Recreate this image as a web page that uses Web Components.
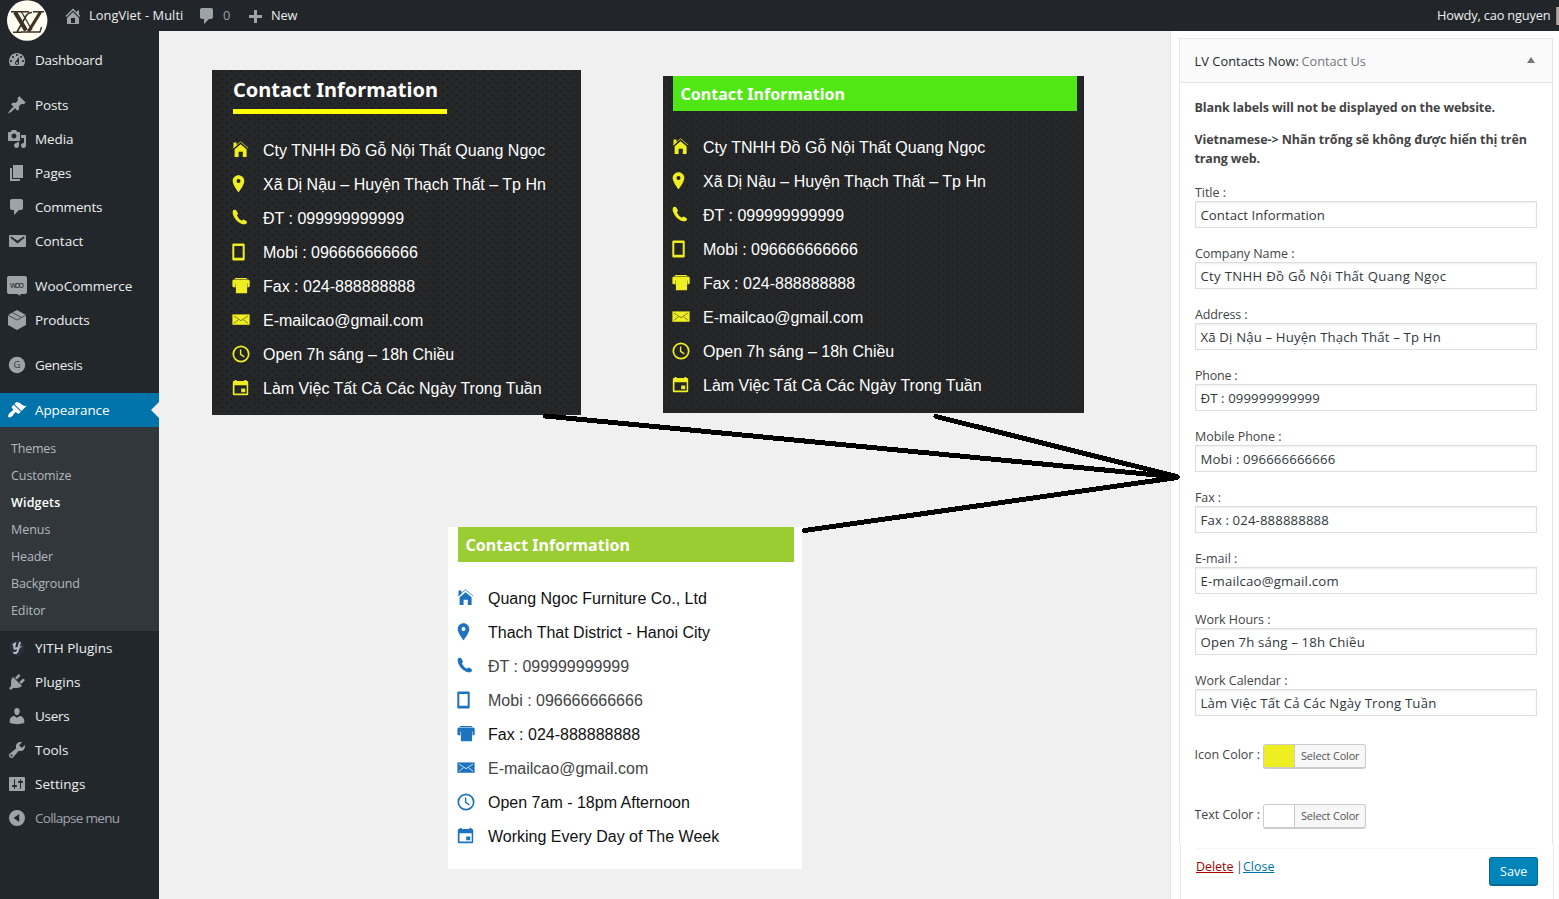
<!DOCTYPE html>
<html lang="vi">
<head>
<meta charset="utf-8">
<title>Widgets - LongViet</title>
<style>
html,body{margin:0;height:100%;overflow:hidden}
body{background:#f0f0f0;font-family:"Open Sans","Noto Sans",sans-serif;font-size:13px;color:#444}
</style>
</head>
<body>
<wp-screen></wp-screen>
<script>
const define=(name,html,setup)=>customElements.define(name,class extends HTMLElement{
  connectedCallback(){
    if(this.shadowRoot)return;
    const t=document.createElement('template');
    t.innerHTML=typeof html==='function'?html(this):html;
    this.attachShadow({mode:'open'}).append(t.content.cloneNode(true));
    if(setup)setup(this);
  }
});

/* Text run set to an exact width through letter-spacing */
define('fit-text','<style>:host{display:inline-block;white-space:nowrap}span{display:inline-block;white-space:pre;text-decoration:var(--line,none)}</style><span><slot></slot></span>',el=>{
  const s=el.shadowRoot.querySelector('span'),w=parseFloat(el.getAttribute('w')),n=el.textContent.length;
  if(w){s.style.letterSpacing=((w+.4-s.getBoundingClientRect().width)/n).toFixed(4)+'px';el.style.width=w+'px'}
});

const DASH={
home:'<path fill-rule="evenodd" d="M16 8.5l1.53 1.53-1.06 1.06L10 4.6l-6.47 6.49-1.06-1.06L10 2.5l4 4v-2h2v4zm-6-2.46l6 5.99V18H4v-5.97zM12 17v-5H8v5h4z"/>',
plus:'<path d="M17 9v3h-5v5H9v-5H4V9h5V4h3v5h5z"/>',
dashboard:'<path fill-rule="evenodd" d="M3.76 16h12.48c1.1-1.37 1.76-3.11 1.76-5 0-4.42-3.58-8-8-8s-8 3.58-8 8c0 1.89.66 3.63 1.76 5zM10 4c.55 0 1 .45 1 1s-.45 1-1 1-1-.45-1-1 .45-1 1-1zM6 6c.55 0 1 .45 1 1s-.45 1-1 1-1-.45-1-1 .45-1 1-1zm8 0c.55 0 1 .45 1 1s-.45 1-1 1-1-.45-1-1 .45-1 1-1zm-5.37 5.55L12 7v6c0 1.1-.9 2-2 2s-2-.9-2-2c0-.57.24-1.08.63-1.45zM4 10c.55 0 1 .45 1 1s-.45 1-1 1-1-.45-1-1 .45-1 1-1zm12 0c.55 0 1 .45 1 1s-.45 1-1 1-1-.45-1-1 .45-1 1-1zm-5 3c0-.55-.45-1-1-1s-1 .45-1 1 .45 1 1 1 1-.45 1-1z"/>',
post:'<path d="M10.44 3.02l1.82-1.82 6.36 6.35-1.83 1.82c-1.05-.68-2.48-.57-3.41.36l-.75.75c-.92.93-1.04 2.35-.35 3.41l-1.83 1.82-2.41-2.41-2.8 2.79c-.42.42-3.38 2.71-3.8 2.29s1.86-3.39 2.28-3.81l2.79-2.79L4.1 9.36l1.83-1.82c1.05.69 2.48.57 3.4-.36l.75-.75c.93-.92 1.05-2.35.36-3.41z"/>',
media:'<path fill-rule="evenodd" d="M13 11V4c0-.55-.45-1-1-1h-1.67L9 1H5L3.67 3H2c-.55 0-1 .45-1 1v7c0 .55.45 1 1 1h10c.55 0 1-.45 1-1zM7 4.5c1.38 0 2.5 1.12 2.5 2.5S8.38 9.5 7 9.5 4.5 8.38 4.5 7 5.62 4.5 7 4.5zM14 6h5v10.5c0 1.38-1.12 2.5-2.5 2.5S14 17.88 14 16.5s1.12-2.5 2.5-2.5c.17 0 .34.02.5.05V9h-3V6zm-4 8.05V13h2v3.5c0 1.38-1.12 2.5-2.5 2.5S7 17.88 7 16.5 8.12 14 9.5 14c.17 0 .34.02.5.05z"/>',
page:'<path d="M6 15V2h10v13H6zm-1 1h8v2H3V5h2v11z"/>',
comment:'<path d="M5 2h9c1.1 0 2 .9 2 2v7c0 1.1-.9 2-2 2h-2l-5 5v-5H5c-1.1 0-2-.9-2-2V4c0-1.1.9-2 2-2z"/>',
mail:'<path fill-rule="evenodd" d="M3 4h15q1 0 1 1v10q0 1-1 1H3q-1 0-1-1V5q0-1 1-1zm7.49 8.6l6.74-5.53c.24-.2.43-.66.13-1.07-.29-.41-.82-.42-1.17-.17l-5.7 3.86L4.8 5.83c-.35-.25-.88-.24-1.17.17-.3.41-.11.87.13 1.07z"/>',
woo:'<path d="M2 0h16q2 0 2 2v14q0 2-2 2h-5l1 2-4-2H2q-2 0-2-2V2Q0 0 2 0z"/><text x="10" y="11.600" text-anchor="middle" textLength="14" font-family="Open Sans" font-weight="600" font-size="7" fill="#33383d">WOO</text>',
box:'<path d="M10 0l9 5v10l-9 5-9-5V5z"/><path d="M1 5.2l9 4.800 9-4.800M5.500 2.700l9 4.800" fill="none" stroke="#3b4046" stroke-width=".9"/>',
genesis:'<circle cx="10" cy="10" r="8.2"/><text x="10" y="13.400" text-anchor="middle" font-family="Open Sans" font-size="9.500" fill="#33383d">G</text>',
brush:'<path d="M14.48 11.06L7.41 3.99l1.5-1.5c.5-.56 2.3-.47 3.51.32 1.21.8 1.43 1.28 2.91 2.1 1.18.64 2.45 1.26 4.45.85zm-.71.71L6.7 4.7 4.93 6.47c-.39.39-.39 1.02 0 1.41l1.06 1.06c.39.39.39 1.03 0 1.42-.6.6-1.43 1.11-2.21 1.69-.35.26-.7.53-1.01.84C1.43 14.23.4 16.08 1.4 17.07c.99 1 2.84-.03 4.18-1.36.31-.31.58-.66.85-1.02.57-.78 1.08-1.61 1.69-2.21.39-.39 1.02-.39 1.41 0l1.06 1.06c.39.39 1.02.39 1.41 0z"/>',
yith:'<circle cx="10" cy="10" r="8" fill="#262f40"/><g fill="none" stroke="#b6babd" stroke-width="2" stroke-linecap="round"><path d="M6.400 6.600l1.500-.8-.7 4q.3 1.800 2.600.4M12.800 4.800l-2.200 8.400Q9.400 16 7 14.700"/><path d="M11 11l3.600-2.600" stroke-width="1"/></g>',
plug:'<path d="M13.11 4.36L9.87 7.6 8 5.73l3.24-3.24c.35-.34 1.05-.2 1.56.32.52.51.66 1.21.31 1.55zm-8 1.77l.91-1.12 9.01 9.01-1.19.84c-.71.71-2.63 1.16-3.82 1.16H6.14L4.9 17.26c-.59.59-1.54.59-2.12 0-.59-.58-.59-1.53 0-2.12l1.24-1.24v-3.88c0-1.13.4-3.19 1.09-3.89zm7.26 3.97l3.24-3.24c.34-.35 1.04-.21 1.55.31.52.51.66 1.21.31 1.55l-3.24 3.25z"/>',
user:'<path d="M10 9.25c-2.27 0-2.73-3.44-2.73-3.44C7 4.02 7.82 2 9.97 2c2.16 0 2.98 2.02 2.71 3.81 0 0-.41 3.44-2.68 3.44zm0 2.57L12.72 10c2.39 0 4.52 2.33 4.52 4.53v2.49s-3.65 1.13-7.24 1.13c-3.65 0-7.24-1.13-7.24-1.13v-2.49c0-2.25 1.94-4.48 4.47-4.48z"/>',
tool:'<path fill-rule="evenodd" d="M16.68 9.77c-1.34 1.34-3.3 1.67-4.95.99l-5.41 6.52c-.99.99-2.59.99-3.58 0s-.99-2.59 0-3.57l6.52-5.42c-.68-1.65-.35-3.61.99-4.95 1.28-1.28 3.12-1.62 4.72-1.06l-2.89 2.89 2.82 2.82 2.86-2.87c.53 1.58.18 3.39-1.08 4.65zM3.81 16.21c.4.39 1.04.39 1.43 0 .4-.4.4-1.04 0-1.43-.39-.4-1.03-.4-1.43 0-.39.39-.39 1.03 0 1.43z"/>',
settings:'<path fill-rule="evenodd" d="M18 16V4c0-.55-.45-1-1-1H3c-.55 0-1 .45-1 1v12c0 .55.45 1 1 1h14c.55 0 1-.45 1-1zM8 11h1c.55 0 1 .45 1 1s-.45 1-1 1H8v1.5c0 .28-.22.5-.5.5s-.5-.22-.5-.5V13H6c-.55 0-1-.45-1-1s.45-1 1-1h1V5.5c0-.28.22-.5.5-.5s.5.22.5.5V11zm5-2h-1c-.55 0-1-.45-1-1s.45-1 1-1h1V5.5c0-.28.22-.5.5-.5s.5.22.5.5V7h1c.55 0 1 .45 1 1s-.45 1-1 1h-1v5.5c0 .28-.22.5-.5.5s-.5-.22-.5-.5V9z"/>',
collapse:'<path fill-rule="evenodd" d="M10 2a8 8 0 1 1 0 16 8 8 0 0 1 0-16zM12.200 6L6.600 10l5.600 4z"/>'
};
define('dash-icon',el=>`<style>:host{display:block;width:20px;height:20px;color:#9ea3a8;flex:none}svg{display:block;overflow:visible}</style><svg width="20" height="20" viewBox="0 0 20 20" fill="currentColor">${DASH[el.getAttribute('name')]}</svg>`);

/* 18px glyphs of the contact list */
const CI={
house:'<g transform="translate(0 -.6)"><path d="M2.600 8.800L8.600 3.900l6 4.900v7.800h-3.800v-5.200H6.600v5.200H2.600zM1.500 2h3v3.400L1.500 7.800z"/><path d="M.8 7.700L8.600 1.400l7.600 6.300" fill="none" stroke="currentColor" stroke-width="1" opacity=".75"/></g>',
pin:'<path fill-rule="evenodd" d="M6.500.2C3.200.2.700 2.700.700 5.900c0 4.300 5.800 11.300 5.800 11.300s5.800-7 5.800-11.300C12.300 2.700 9.800.2 6.500.2zm0 3.800a2 2 0 1 1 0 4 2 2 0 0 1 0-4z"/>',
phone:'<path d="M1.100 1.300Q2.800.2 3.900 1.100L6 4.300Q6 5.200 4.900 6.500 6.500 10 9.900 11.800L11.300 10.600Q12.200 10.400 14.900 12.600 15.300 13.600 14.300 14.700 12.600 15.800 9.600 14.900 2.900 12 .9 5.200.2 2.600 1.100 1.300z"/>',
mobile:'<path fill-rule="evenodd" d="M1.500.4h10Q12.700.4 12.700 1.500v14.900q0 1.100-1.200 1.100h-10Q.3 17.500.3 16.400V1.500Q.3.400 1.500.4zM2.300 2.900v11.800h8.400V2.900z"/>',
fax:'<path d="M3 1h11.800v1H3zM1.800 2.500H16q1.700 0 1.700 1.600v5q0 1.200-1.200 1.200h-1.400v5.900H3.900v-5.900H1.600Q.4 10.300.4 9.100v-5Q.4 2.500 1.800 2.500z"/><path d="M3.500 6.500v4M15.500 6.500v4" stroke="var(--hole)" stroke-width=".6"/>',
mail:'<path d="M.4 3.400h17.200v10.400H.4z"/><path d="M2 5l7 4.700L16 5M2 12.300l4.600-3.600M16 12.300l-4.600-3.600" stroke="var(--hole)" fill="none" stroke-width=".9"/>',
clock:'<circle cx="9" cy="9" r="7.700" fill="none" stroke="currentColor" stroke-width="1.700"/><path d="M8.600 4.600v4.800l3.700 2.400" fill="none" stroke="currentColor" stroke-width="1.400"/>',
cal:'<path fill-rule="evenodd" d="M2.600 2.100V1h2v1.100h7.800V1h2v1.100h.6q1.200 0 1.200 1.200v11.800q0 1.200-1.200 1.200H2q-1.200 0-1.200-1.200V3.300q0-1.200 1.200-1.200zM2.500 6.200v8.400h12.200V6.200zM9.200 9.400h4v3.800h-4z"/>'
};
define('contact-row',el=>`<style>
:host{display:flex;height:34px;align-items:center;font:16px/20px "Liberation Sans",Arial,sans-serif}
svg{display:block;flex:none;width:18px;height:18px;color:var(--icon);margin:0 13px 1px 0;overflow:visible}
span{white-space:nowrap;padding-top:2px}</style><svg viewBox="0 0 18 18" fill="currentColor">${CI[el.getAttribute('icon')]}</svg><span><slot></slot></span>`);

define('contact-card',`<style>
:host{display:block;box-sizing:border-box;flex:none;color:var(--text)}
:host([dark]){--icon:#eeee22;--text:#fff;--hole:#77761f;background:radial-gradient(circle at 1.500px 1.500px,#0e0f10 .6px,transparent .7px) 0 0/9px 8px,radial-gradient(circle at 6.500px 5.500px,#0e0f10 .6px,transparent .7px) 0 0/9px 8px,#242628}
:host([light]){--icon:#1e73be;--text:#111;--hole:#dbe8f4;background:#fff}
</style><slot name="title"></slot><slot></slot>`);

define('side-item',el=>`<style>
:host{display:flex;align-items:center;height:34px;padding-left:7px;position:relative;font-size:13.500px;line-height:20px;color:#eee}
.t{margin-left:8px}
:host([gap]){margin-top:11px}
:host([active]){background:#0073aa;color:#fff}
:host([active]) dash-icon{color:#fff}
:host([active])::after{content:"";position:absolute;right:0;top:9px;border:8px solid transparent;border-left:0;border-right-color:#f0f0f0}
:host([dim]){color:#a0a5aa}
</style><dash-icon name="${el.getAttribute('icon')}"></dash-icon><fit-text class="t" w="${el.getAttribute('w')}">${el.textContent}</fit-text>`);

define('side-menu',()=>{
 const I=(icon,t,w,x='')=>`<side-item icon="${icon}" w="${w}" ${x}>${t}</side-item>`;
 const S=[['Themes',44.500],['Customize',60],['Widgets',49],['Menus',39],['Header',41.500],['Background',68.500],['Editor',34]];
 return `<style>:host{display:block;box-sizing:border-box;width:159px;padding-top:12px;background:#22272c;flex:none}
 .sub{background:#32373c;padding:7.500px 0 7.500px 11px;color:#b4b9be;font-size:12.500px;line-height:27px}.sub div{height:27px}
 .on{color:#fff;font-weight:600}</style>`+
 I('dashboard','Dashboard',67)+I('post','Posts',33,'gap')+I('media','Media',38)+I('page','Pages',36)+I('comment','Comments',67)+I('mail','Contact',48)+
 I('woo','WooCommerce',97,'gap')+I('box','Products',54)+I('genesis','Genesis',47,'gap')+I('brush','Appearance',74,'gap active')+
 '<div class="sub">'+S.map(([t,w])=>`<div${t==='Widgets'?' class="on"':''}><fit-text w="${w}">${t}</fit-text></div>`).join('')+'</div>'+
 I('yith','YITH Plugins',77)+I('plug','Plugins',45)+I('user','Users',34)+I('tool','Tools',33)+I('settings','Settings',50)+I('collapse','Collapse menu',84,'dim');
});

define('admin-bar',`<style>
:host{display:flex;align-items:center;height:31px;background:#22262b;color:#eee;font-size:12.800px;line-height:20px;position:relative;padding-left:63px;flex:none;overflow:visible;z-index:3}
fit-text{margin-bottom:2px}
.logo{position:absolute;left:7px;top:0}
.n{color:#9ea3a8}.sp{flex:1}.av{width:3px;height:18px;margin-left:6px;background:#b9a49a;border-left:1px solid #8c8f94;box-sizing:border-box}
</style>
<svg class="logo" width="41" height="41" viewBox="0 0 41 41"><circle cx="20.200" cy="20.500" r="20.200" fill="#fffdf2"/>
<g fill="none" stroke="#3d3222"><path d="M4 11.800h12M15 11.800h7M26 11.800h11M6 32.300h8.500M14 32h19l1.500-5" stroke-width="1.400"/><path d="M8 12l11 18.500" stroke-width="4.200"/><path d="M25 12.500q-4 0-6 3.500L10 32" stroke-width="1.600"/><path d="M33.500 12L21.500 31.500" stroke-width="3.200"/><path d="M14.500 12l10.500 18" stroke-width="1.300"/></g></svg>
<dash-icon name="home"></dash-icon><fit-text w="94" style="margin-left:6px">LongViet - Multi</fit-text>
<dash-icon name="comment" style="margin-left:14px"></dash-icon><fit-text w="7" class="n" style="margin-left:6px">0</fit-text>
<dash-icon name="plus" style="margin-left:15px"></dash-icon><fit-text w="26" style="margin-left:6px">New</fit-text>
<span class="sp"></span><fit-text w="113">Howdy, cao nguyen</fit-text><span class="av"></span>`);

define('form-field',el=>`<style>
:host{display:block;height:61px}
label{display:block;font-size:12.500px;line-height:20px;height:18px}
.i{box-sizing:border-box;width:342px;height:27px;border:1px solid #ddd;box-shadow:inset 0 1px 2px rgba(0,0,0,.07);padding-left:4.500px;font-size:13.200px;line-height:26px;color:#32373c;background:#fff}
</style><label><fit-text w="${el.getAttribute('lw')}">${el.getAttribute('label')}</fit-text></label><div class="i"><fit-text w="${el.getAttribute('w')}">${el.textContent}</fit-text></div>`);

define('color-field',el=>`<style>
:host{display:flex;height:60px;font-size:12.500px;line-height:22px}
.b{box-sizing:border-box;display:flex;width:103px;height:25px;border:1px solid #ccc;border-bottom-width:2px;border-radius:3px;margin-left:3px;background:#f7f7f7;font-size:11px;line-height:22px;color:#555;overflow:hidden}
.s{box-sizing:border-box;width:31px;border-right:1px solid #ccc;background:${el.getAttribute('color')}}
.b fit-text{margin-left:6.500px}
</style><fit-text w="65">${el.textContent}</fit-text><div class="b"><div class="s"></div><fit-text w="58">Select Color</fit-text></div>`);

define('widget-panel',()=>{
 const F=[['Title :',30.500,'Contact Information',124],['Company Name :',99,'Cty TNHH Đồ Gỗ Nội Thất Quang Ngọc',245.500],['Address :',52,'Xã Dị Nậu – Huyện Thạch Thất – Tp Hn',240],['Phone :',42,'ĐT : 099999999999',119],['Mobile Phone :',86,'Mobi : 096666666666',134.500],['Fax :',25.500,'Fax : 024-888888888',128],['E-mail :',42,'E-mailcao@gmail.com',138],['Work Hours :',75,'Open 7h sáng – 18h Chiều',164],['Work Calendar :',92,'Làm Việc Tất Cả Các Ngày Trong Tuần',235.500]];
 return `<style>
:host{display:flex;flex-direction:column;box-sizing:border-box;width:389px;flex:none;border-left:1px solid #e2e2e2;background:#fff;padding:7px 0 0 8px}
.head{box-sizing:border-box;display:flex;align-items:center;width:374px;height:45px;border:1px solid #e5e5e5;background:#fafafa;padding:1px 17px 0 14.500px;font-size:12.800px;line-height:20px;flex:none}
.head b{font-weight:500;color:#23282d}.head .c{color:#72777c;margin-left:3px;flex:1}
.up{border:4.500px solid transparent;border-top:0;border-bottom:6px solid #72777c;margin-top:-3px}
.body{box-sizing:border-box;width:374px;height:762px;border:1px solid #e5e5e5;border-width:0 1px;padding:15px 15px 0 14.500px;flex:none}
.body form-field{margin-left:.5px}
.p{font-weight:700;font-size:12.500px;line-height:19px;margin:0 0 13px}
.p+.p{margin-bottom:15px}
.cols{padding-top:13px}
.foot{box-sizing:border-box;width:374px;height:54px;margin-left:1px;border:1px solid #e8e8e8;border-width:0 1px;padding:0 15px 0 15px;flex:none}
.rule{height:3px;border-bottom:1px solid #f4f4f4}
.row{display:flex;font-size:12.500px;line-height:20px;padding-top:8px}
.d{color:#a00;--line:underline}.k{color:#0073aa;--line:underline}
.save{box-sizing:border-box;width:49px;height:29px;margin-left:auto;border:1px solid #006799;border-bottom-width:2px;border-radius:3px;background:#0085ba;color:#fff;text-align:center;line-height:27px;font-weight:500}
</style>
<div class="head"><b><fit-text w="104">LV Contacts Now:</fit-text></b><span class="c"><fit-text w="64">Contact Us</fit-text></span><span class="up"></span></div>
<div class="body"><p class="p"><fit-text w="300">Blank labels will not be displayed on the website.</fit-text></p>
<p class="p"><fit-text w="332">Vietnamese-&gt; Nhãn trống sẽ không được hiển thị trên</fit-text><br><fit-text w="65">trang web.</fit-text></p>
${F.map(f=>`<form-field label="${f[0]}" lw="${f[1]}" w="${f[3]}">${f[2]}</form-field>`).join('')}
<div class="cols"><color-field color="#eeee22" style="margin-top:-1px">Icon Color :</color-field><color-field color="#fff">Text Color :</color-field></div></div>
<div class="foot"><div class="rule"></div><div class="row"><fit-text class="d" w="37">Delete</fit-text><span style="margin:0 3px 0 3px;width:4px">|</span><fit-text class="k" w="31">Close</fit-text><span class="save"><fit-text w="27">Save</fit-text></span></div></div>`;
});

define('demo-canvas',()=>{
 const ic=['house','pin','phone','mobile','fax','mail','clock','cal'];
 const vi=['Cty TNHH Đồ Gỗ Nội Thất Quang Ngọc','Xã Dị Nậu – Huyện Thạch Thất – Tp Hn','ĐT : 099999999999','Mobi : 096666666666','Fax : 024-888888888','E-mailcao@gmail.com','Open 7h sáng – 18h Chiều','Làm Việc Tất Cả Các Ngày Trong Tuần'];
 const en=['Quang Ngoc Furniture Co., Ltd','Thach That District - Hanoi City',vi[2],vi[3],vi[4],vi[5],'Open 7am - 18pm Afternoon','Working Every Day of The Week'];
 const rows=(a,g)=>a.map((t,i)=>`<contact-row icon="${ic[i]}"${g&&[2,3,5].includes(i)?' style="color:#444"':''}>${t}</contact-row>`).join('');
 return `<style>
:host{display:block;flex:1;position:relative;background:#f0f0f0}
.top{display:flex;align-items:flex-start;padding:39px 0 0 53px}
.a{width:369px;height:345px;padding-left:20px}
.b{width:421px;height:337px;margin:6px 0 0 82px;padding-left:9px}
.c{width:354px;height:342px;margin:112px 0 0 289px;padding-left:9px}
h3{margin:0;color:#fff;font-family:"Noto Sans","Open Sans",sans-serif;font-weight:700}
.a h3{width:214px;height:39px;border-bottom:5px solid #ff0;font-size:20px;line-height:39px;margin:0 0 19px 1px;box-sizing:content-box}
.b h3,.c h3{font-size:16px;line-height:36px;height:35px;padding-left:7.500px;margin:0 7px 19px 1px;background:#50e714}
.c h3{background:#9acd32;margin-right:8px}
.lines{position:absolute;left:0;top:0;z-index:2}
</style>
<div class="top"><contact-card class="a" dark><h3 slot="title"><fit-text w="204.500">Contact Information</fit-text></h3>${rows(vi)}</contact-card>
<contact-card class="b" dark><h3 slot="title"><fit-text w="164">Contact Information</fit-text></h3>${rows(vi)}</contact-card></div>
<contact-card class="c" light><h3 slot="title"><fit-text w="164">Contact Information</fit-text></h3>${rows(en,1)}</contact-card>
<svg class="lines" width="1030" height="520" viewBox="159 31 1030 520" fill="none" stroke="#000" stroke-width="5" stroke-linecap="round" shape-rendering="crispEdges"><path d="M545.500 416L1177 477M936 416.500L1177 476.500M804.500 530.500L1177 477.500"/></svg>`;
});

define('wp-screen',`<style>:host{display:flex;flex-direction:column;width:1559px;height:899px;overflow:hidden}main{display:flex;height:868px}</style>
<admin-bar></admin-bar><main><side-menu></side-menu><demo-canvas></demo-canvas><widget-panel></widget-panel></main>`);
</script>
</body>
</html>
